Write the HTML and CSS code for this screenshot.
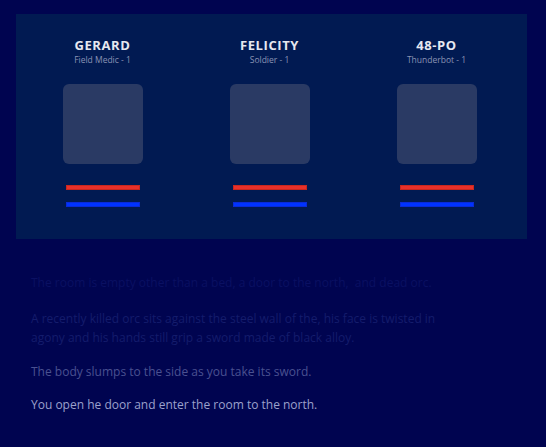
FILE: index.html
```html
<!DOCTYPE html>
<html>
<head>
<meta charset="utf-8">
<link rel="stylesheet" href="styles.css">
</head>
<body>
<div class="party">
  <div class="member">
    <div class="name">GERARD</div>
    <div class="role">Field Medic - 1</div>
    <div class="portrait"></div>
    <div class="bar hp"></div>
    <div class="bar mp"></div>
  </div>
  <div class="member">
    <div class="name">FELICITY</div>
    <div class="role">Soldier - 1</div>
    <div class="portrait"></div>
    <div class="bar hp"></div>
    <div class="bar mp"></div>
  </div>
  <div class="member">
    <div class="name">48-PO</div>
    <div class="role">Thunderbot - 1</div>
    <div class="portrait"></div>
    <div class="bar hp"></div>
    <div class="bar mp"></div>
  </div>
</div>
<div class="log">
  <p class="l1">The room is empty other than a bed, a door to the north,&nbsp; and dead orc.</p>
  <p class="l2">A recently killed orc sits against the steel wall of the, his face is twisted in agony and his hands still grip a sword made of black alloy.</p>
  <p class="l3">The body slumps to the side as you take its sword.</p>
  <p class="l4">You open he door and enter the room to the north.</p>
</div>
</body>
</html>
```
FILE: styles.css
```css
html, body {
  margin: 0;
  padding: 0;
  background: #000450;
  font-family: "Open Sans", "Liberation Sans", sans-serif;
}
.party {
  margin: 14px 0 0 16px;
  width: 511px;
  height: 225px;
  box-sizing: border-box;
  background: #011a52;
  padding: 23px 0 0 3px;
  display: grid;
  grid-template-columns: 167px 167px 167px;
  align-content: start;
}
.member {
  display: flex;
  flex-direction: column;
  align-items: center;
}
.name {
  color: #e6e8f0;
  font-weight: 700;
  font-size: 13px;
  line-height: 16px;
  letter-spacing: 0.6px;
}
.role {
  color: #8a93b4;
  font-size: 8.5px;
  line-height: 12px;
  margin-top: 1px;
}
.portrait {
  width: 80px;
  height: 80px;
  border-radius: 6px;
  background: #2a3a64;
  margin-top: 18px;
}
.bar {
  width: 74px;
  height: 5px;
  box-sizing: border-box;
}
.hp {
  margin-top: 21px;
  background: #e8302a;
  border: 1px solid #c8281f;
}
.mp {
  margin-top: 12px;
  background: #0033ff;
  border: 1px solid #0a2ad8;
}
.log {
  padding: 34px 0 0 31px;
  width: 430px;
  font-size: 12px;
  line-height: 19px;
}
.log p {
  margin: 0;
}
.l1 { color: #0a1062; margin-bottom: 17px !important; }
.l2 { color: #141c6c; margin-bottom: 15px !important; }
.l3 { color: #4a5190; margin-bottom: 14px !important; }
.l4 { color: #9ca1cc; }
```
